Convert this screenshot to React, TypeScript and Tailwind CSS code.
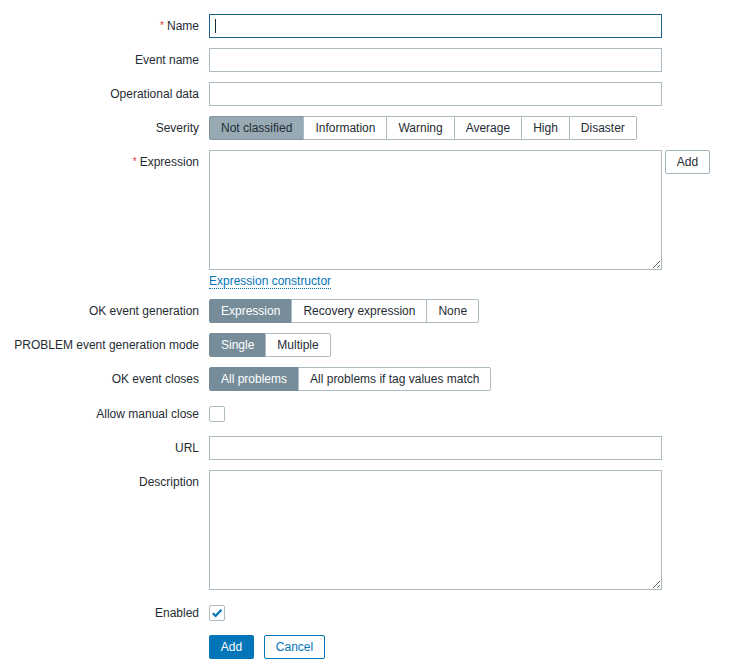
import type { ReactNode } from 'react'

const textColor = 'text-[#1f2c33]'

function Label({
  children,
  required,
  className = '',
}: {
  children: ReactNode
  required?: boolean
  className?: string
}) {
  return (
    <div className={`text-right leading-[24px] whitespace-nowrap ${textColor} ${className}`}>
      {required && <span className="text-[#e33734] text-[10px] mr-[3px] align-top">*</span>}
      {children}
    </div>
  )
}

function TextInput({ focused }: { focused?: boolean }) {
  return (
    <div className="relative w-[453px] h-[24px]">
      <input
        type="text"
        className={[
          'w-full h-full px-[5px] bg-white border outline-none caret-transparent',
          focused ? 'border-[#1a5f8e]' : 'border-[#acbbc2]',
        ].join(' ')}
      />
      {focused && <span className="absolute left-[6px] top-[5px] w-px h-[14px] bg-[#1f2c33]" />}
    </div>
  )
}

function TextArea() {
  return (
    <textarea className="block w-[453px] h-[120px] px-[5px] py-[4px] bg-white border border-[#acbbc2] outline-none resize" />
  )
}

type SegmentVariant = 'severity' | 'default'

function Segmented({
  options,
  selected,
  variant = 'default',
}: {
  options: string[]
  selected: number
  variant?: SegmentVariant
}) {
  return (
    <div className="flex h-[24px]">
      {options.map((opt, i) => {
        const isSel = i === selected
        const selClass =
          variant === 'severity'
            ? 'bg-[#97aab3] border-[#7f949e] text-[#1f2c33]'
            : 'bg-[#768d99] border-[#768d99] text-white'
        return (
          <div
            key={opt}
            className={[
              'px-[11px] flex items-center border whitespace-nowrap',
              i > 0 ? '-ml-px' : '',
              i === 0 ? 'rounded-l-[2px]' : '',
              i === options.length - 1 ? 'rounded-r-[2px]' : '',
              isSel ? selClass : 'bg-white border-[#acbbc2] text-[#1f2c33]',
            ].join(' ')}
          >
            {opt}
          </div>
        )
      })}
    </div>
  )
}

function Checkbox({ checked }: { checked?: boolean }) {
  return (
    <div className="h-[25px] flex items-center">
      <div className="w-[16px] h-[16px] rounded-[2px] border border-[#acbbc2] bg-white flex items-center justify-center">
        {checked && (
          <svg width="12" height="12" viewBox="0 0 12 12" fill="none">
            <path d="M1.8 6.2 L4.6 9 L10.4 2.8" stroke="#0275b8" strokeWidth="2.2" />
          </svg>
        )}
      </div>
    </div>
  )
}

export default function App() {
  return (
    <div
      className={`bg-white w-[748px] h-[667px] pt-[14px] text-[12px] ${textColor}`}
      style={{ fontFamily: '"Liberation Sans", Arial, sans-serif' }}
    >
      <div className="grid grid-cols-[199px_1fr] gap-x-[10px] gap-y-[10px] items-start">
        <Label required>Name</Label>
        <TextInput focused />

        <Label>Event name</Label>
        <TextInput />

        <Label>Operational data</Label>
        <TextInput />

        <Label>Severity</Label>
        <Segmented
          variant="severity"
          selected={0}
          options={['Not classified', 'Information', 'Warning', 'Average', 'High', 'Disaster']}
        />

        <Label required>Expression</Label>
        <div>
          <div className="flex items-start gap-[3px]">
            <TextArea />
            <button
              type="button"
              className="h-[24px] w-[45px] border border-[#a3b3bb] rounded-[2px] bg-white text-[#1f2c33]"
            >
              Add
            </button>
          </div>
          <div className="mt-[3px] leading-[16px]">
            <span className="text-[#0275b8] border-b border-dotted border-[#0275b8]">Expression constructor</span>
          </div>
        </div>

        <Label>OK event generation</Label>
        <Segmented selected={0} options={['Expression', 'Recovery expression', 'None']} />

        <Label>PROBLEM event generation mode</Label>
        <Segmented selected={0} options={['Single', 'Multiple']} />

        <Label>OK event closes</Label>
        <Segmented selected={0} options={['All problems', 'All problems if tag values match']} />

        <Label className="pt-px">Allow manual close</Label>
        <Checkbox />

        <Label>URL</Label>
        <TextInput />

        <Label>Description</Label>
        <TextArea />

        <Label className="pt-px">Enabled</Label>
        <Checkbox checked />

        <div />
        <div className="flex gap-[10px]">
          <button type="button" className="h-[24px] w-[45px] rounded-[2px] bg-[#0275b8] text-white">
            Add
          </button>
          <button
            type="button"
            className="h-[24px] w-[61px] rounded-[2px] border border-[#0275b8] bg-white text-[#0275b8]"
          >
            Cancel
          </button>
        </div>
      </div>
    </div>
  )
}
